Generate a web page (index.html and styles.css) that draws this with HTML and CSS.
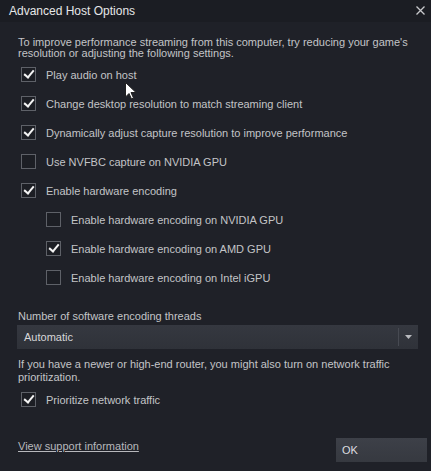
FILE: index.html
```html
<!DOCTYPE html>
<html>
<head>
<meta charset="utf-8" />
<title>Advanced Host Options</title>
<link rel="stylesheet" href="styles.css">
</head>
<body>
<div class="dialog">
	<div class="titlebar">
		<span class="title">Advanced Host Options</span>
		<svg class="close" width="9" height="9" viewBox="0 0 9 9"><path d="M0.5 0.5L8.5 8.5M8.5 0.5L0.5 8.5" stroke="#c8c9cc" stroke-width="1.3"/></svg>
	</div>

	<div class="content">
		<p class="intro">To improve performance streaming from this computer, try reducing your game's resolution or adjusting the following settings.</p>

		<div class="options">
			<div class="option"><span class="box checked"></span><span>Play audio on host</span></div>
			<div class="option"><span class="box checked"></span><span>Change desktop resolution to match streaming client</span></div>
			<div class="option"><span class="box checked"></span><span>Dynamically adjust capture resolution to improve performance</span></div>
			<div class="option"><span class="box"></span><span>Use NVFBC capture on NVIDIA GPU</span></div>
			<div class="option"><span class="box checked"></span><span>Enable hardware encoding</span></div>
			<div class="option sub"><span class="box"></span><span>Enable hardware encoding on NVIDIA GPU</span></div>
			<div class="option sub"><span class="box checked"></span><span>Enable hardware encoding on AMD GPU</span></div>
			<div class="option sub"><span class="box"></span><span>Enable hardware encoding on Intel iGPU</span></div>
		</div>

		<div class="field-label">Number of software encoding threads</div>
		<div class="select">
			<span class="select-value">Automatic</span>
			<span class="select-arrow"><svg width="7" height="4" viewBox="0 0 7 4"><path d="M0 0H7L3.5 4Z" fill="#b9bbbf"/></svg></span>
		</div>

		<p class="note">If you have a newer or high-end router, you might also turn on network traffic prioritization.</p>
		<div class="option single"><span class="box checked"></span><span>Prioritize network traffic</span></div>

		<div class="footer">
			<a href="#" class="support">View support information</a>
			<button class="ok">OK</button>
		</div>
	</div>

	<svg class="cursor" width="12" height="18" viewBox="0 0 12 18"><path d="M0.5 0.5V15L4 11.5L6.5 17L8.5 16L6 10.5H11Z" fill="#fff" stroke="#222" stroke-width="1"/></svg>
</div>
</body>
</html>
```

FILE: styles.css
```css
html { margin: 0 }
body {

	margin: 0;
	background: #1f2128;
	font-family: "Liberation Sans", Arial, sans-serif;
	font-size: 11px;
	color: #c3c4c7;
}

.dialog {

	position: relative;
	width: 431px;
	height: 471px;
	background: #1f2128;
}

.titlebar {

	display: flex;
	align-items: center;
	justify-content: space-between;
	height: 22px;
	padding: 0 6px 0 9px;
	background: #1b1d23;
}
.title {

	font-size: 12px;
	color: #e6e7e8;
}
.close {

	margin-top: -2px;
}

.content {

	padding: 0 13px 0 18px;
}

.intro, .note {

	margin: 0;
	line-height: 11px;
}
.intro {

	padding-top: 15px;
}
.note {

	line-height: 13px;
	padding-top: 9px;
}

/*

	checkbox rows
*/
.options {

	padding-top: 1px;
}
.option {

	display: flex;
	align-items: center;
	gap: 10px;
	height: 29px;
	padding-left: 3px;
}
.option.sub {

	padding-left: 28px;
}
.option.single {

	margin-top: 1px;
}
.box {

	position: relative;
	width: 13px;
	height: 13px;
	border: 1px solid #5e6168;
	background: #1c1e24;
	flex: none;
}
.box.checked::after {

	content: "";
	position: absolute;
	left: 4px;
	top: 0px;
	width: 4px;
	height: 8px;
	border: solid #f4f4f4;
	border-width: 0 2.5px 2.5px 0;
	transform: rotate(40deg);
}

.field-label {

	margin-top: 18px;
	line-height: 13px;
}
.select {

	display: flex;
	align-items: center;
	justify-content: space-between;
	height: 24px;
	margin: 2px 0 0 -1px;
	background: linear-gradient(#353840, #2f3239);
}
.select-value {

	padding-left: 7px;
	color: #d6d7d9;
}
.select-arrow {

	display: flex;
	align-items: center;
	justify-content: center;
	width: 19px;
	height: 18px;
	border-left: 1px solid #474a52;
}

.footer {

	display: flex;
	align-items: flex-start;
	justify-content: space-between;
	margin: 24px -9px 0 0;
}
.support {

	margin-top: 2px;
	color: #b7b8bc;
	text-decoration: underline;
}
.ok {

	width: 91px;
	height: 24px;
	padding: 0 0 0 6px;
	border: 0;
	text-align: left;
	font-family: inherit;
	font-size: 11px;
	color: #dcdde0;
	background: linear-gradient(#3d4048, #363940);
}

.cursor {

	position: absolute;
	left: 125px;
	top: 82px;
}
```
